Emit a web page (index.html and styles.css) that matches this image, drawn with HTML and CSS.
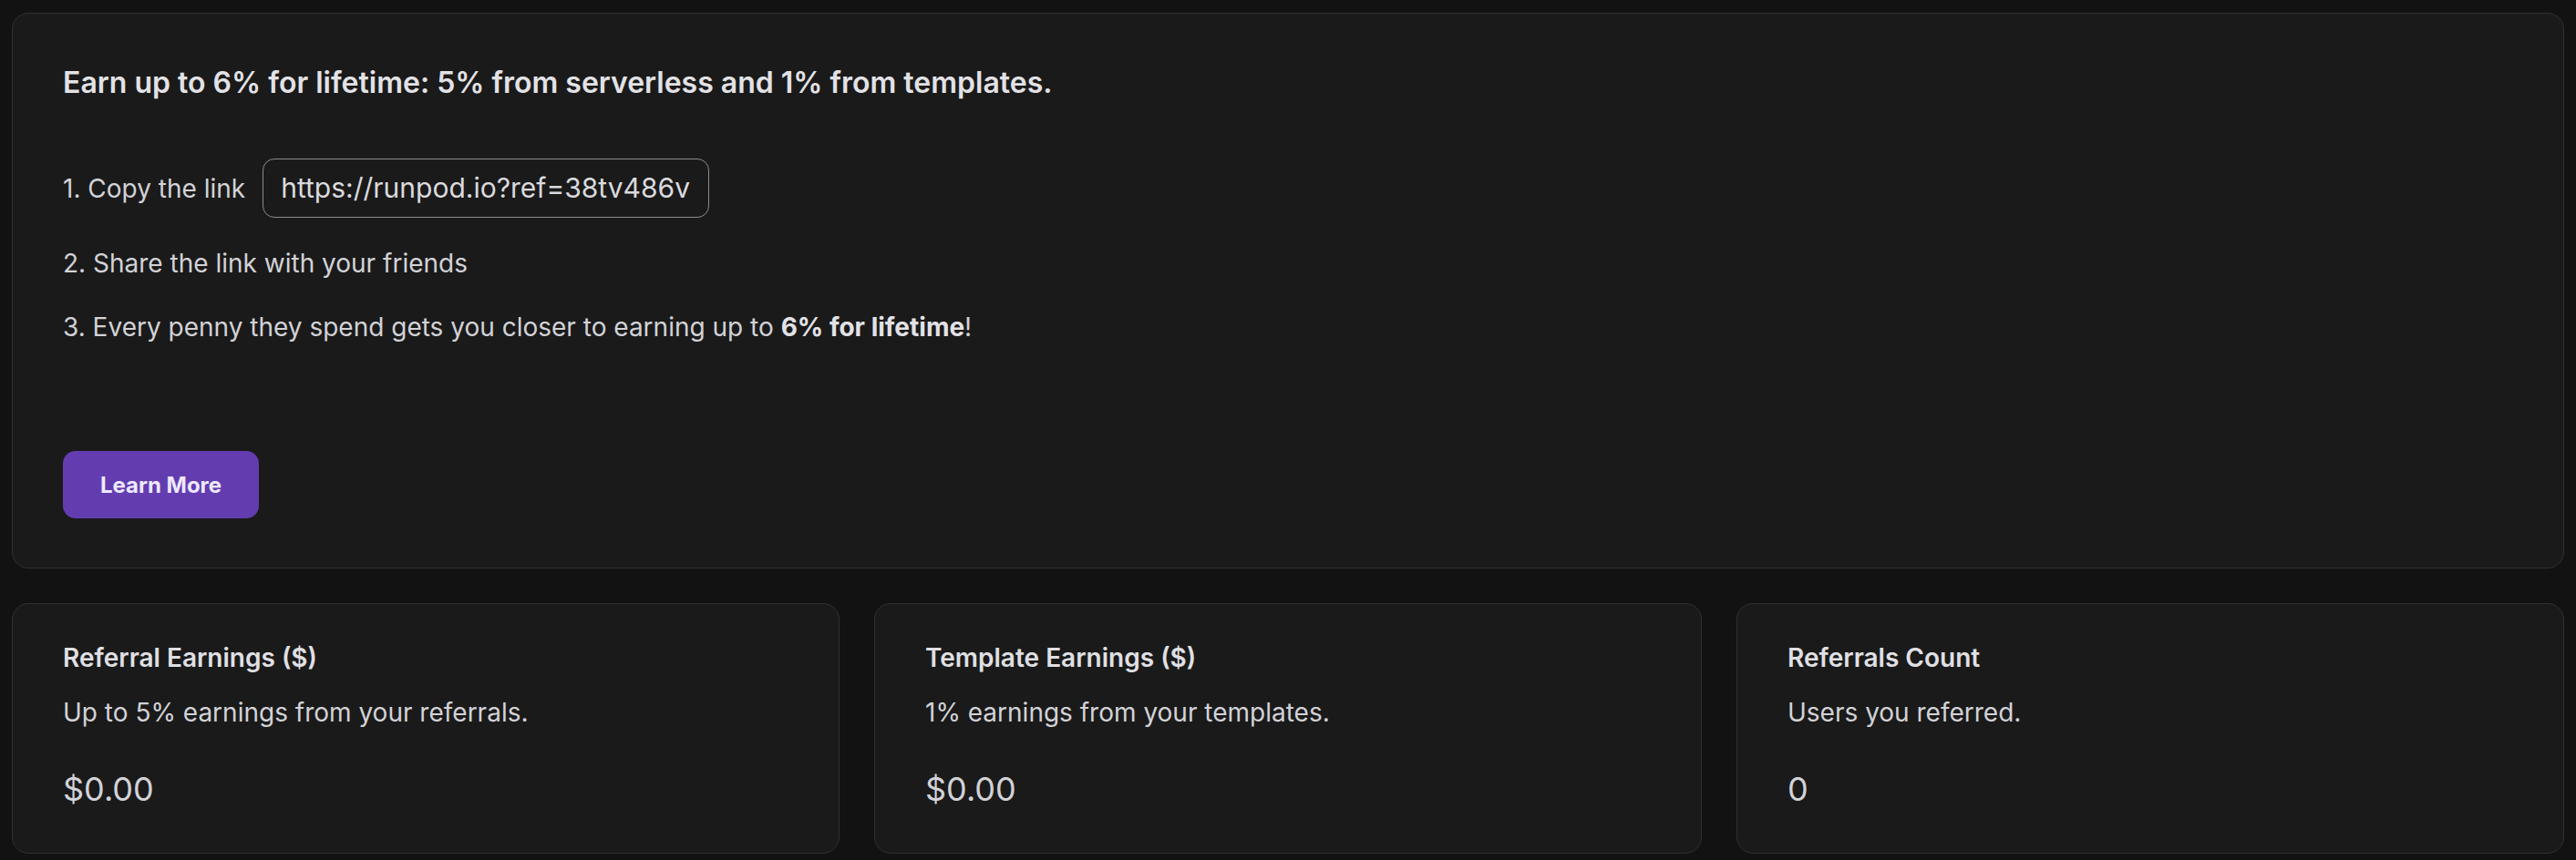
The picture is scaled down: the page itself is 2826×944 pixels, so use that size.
FILE: index.html
```html
<!DOCTYPE html>
<html lang="en">
<head>
    <meta charset="UTF-8">
    <meta name="viewport" content="width=device-width, initial-scale=1.0">
    <title>Referrals</title>
    <link rel="stylesheet" href="styles.css">
</head>
<body>
    <!-- Referral program info -->
    <div class="panel intro">
        <h2 class="intro-title">Earn up to 6% for lifetime: 5% from serverless and 1% from templates.</h2>

        <div class="steps">
            <div class="step step-link">
                <span>1. Copy the link</span>
                <div class="link-box">https://runpod.io?ref=38tv486v</div>
            </div>
            <div class="step">2. Share the link with your friends</div>
            <div class="step">3. Every penny they spend gets you closer to earning up to <b>6% for lifetime</b>!</div>
        </div>

        <button class="learn-more">Learn More</button>
    </div>

    <!-- Stats -->
    <div class="stats">
        <div class="panel stat">
            <div class="stat-title">Referral Earnings ($)</div>
            <div class="stat-desc">Up to 5% earnings from your referrals.</div>
            <div class="stat-value">$0.00</div>
        </div>
        <div class="panel stat">
            <div class="stat-title">Template Earnings ($)</div>
            <div class="stat-desc">1% earnings from your templates.</div>
            <div class="stat-value">$0.00</div>
        </div>
        <div class="panel stat">
            <div class="stat-title">Referrals Count</div>
            <div class="stat-desc">Users you referred.</div>
            <div class="stat-value">0</div>
        </div>
    </div>
</body>
</html>
```
FILE: styles.css
```css
body {
    margin: 0;
    padding: 14px 13px 7px 13px;
    background-color: #121212;
    color: #d2d2d7;
    font-family: Inter, "Noto Sans", sans-serif;
}

/* Shared card look */
.panel {
    background-color: #1a1a1a;
    border: 1px solid #303030;
    border-radius: 18px;
    box-sizing: border-box;
}

/* Top info card */
.intro {
    height: 610px;
    padding: 53px 55px 0 55px;
}
.intro-title {
    margin: 0;
    font-size: 32px;
    line-height: 46px;
    font-weight: 600;
    color: #e2e2e6;
}
.steps {
    margin-top: 60px;
    display: flex;
    flex-direction: column;
    gap: 30px;
}
.step {
    font-size: 28px;
    line-height: 40px;
}
.step b {
    font-weight: 700;
    color: #e2e2e6;
}
.step-link {
    display: flex;
    align-items: center;
    gap: 19px;
}
.link-box {
    border: 1px solid #8c8c8c;
    border-radius: 13px;
    padding: 11px 20px 11px 19px;
    font-size: 30px;
    line-height: 41px;
    color: #dadade;
}

/* 'Learn More' button */
.learn-more {
    margin-top: 116px;
    width: 215px;
    height: 74px;
    border: none;
    border-radius: 14px;
    background-color: #633db0;
    color: #ede9fe;
    font-family: inherit;
    font-size: 24px;
    font-weight: 700;
    cursor: pointer;
}

/* Stat cards row */
.stats {
    margin-top: 38px;
    display: grid;
    grid-template-columns: repeat(3, 1fr);
    gap: 38px;
}
.stat {
    height: 275px;
    padding: 39px 55px 0 55px;
}
.stat-title {
    font-size: 28px;
    line-height: 40px;
    font-weight: 600;
    color: #e0e0e4;
}
.stat-desc {
    margin-top: 20px;
    font-size: 28px;
    line-height: 40px;
}
.stat-value {
    margin-top: 39px;
    font-size: 36px;
    line-height: 50px;
}
```
